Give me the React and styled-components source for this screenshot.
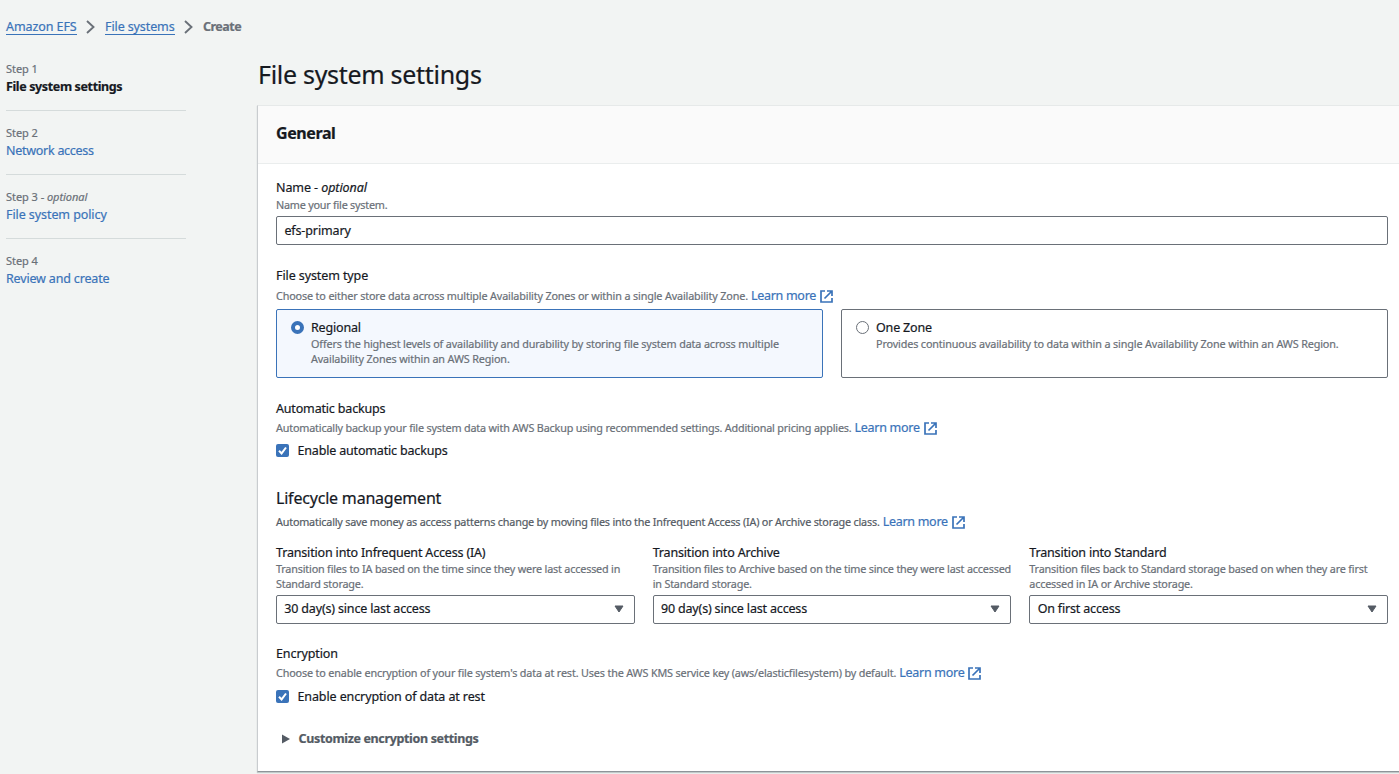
import React from "react";
import styled, { createGlobalStyle } from "styled-components";

const c = {
  page: "#f2f4f3",
  text: "#16191f",
  muted: "#6a7078",
  dark: "#545b64",
  link: "#3a73b9",
  border: "#6a7078",
};

const Global = createGlobalStyle`
  *, *::before, *::after { box-sizing: border-box; }
  html, body { margin: 0; height: 100%; overflow: hidden; }
  body {
    background: ${c.page};
    color: ${c.text};
    font-family: "Noto Sans", "Open Sans", sans-serif;
    font-size: 12.5px;
    letter-spacing: -0.17px;
    line-height: 20px;
    -webkit-text-stroke: 0.2px currentColor;
  }
  h1, h2, h3, p, ol, ul { margin: 0; padding: 0; font-weight: 400; list-style: none; }
`;

const Page = styled.div`
  width: 1399px;
  height: 774px;
  overflow: hidden;
`;

const Breadcrumbs = styled.nav`
  display: flex;
  align-items: center;
  height: 20px;
  margin: 17px 0 0 6px;
`;

const Crumb = styled.a`
  color: ${c.link};
  line-height: 18px;
  height: 17px;
  margin-bottom: 1px;
  border-bottom: 1px solid ${c.link};
  letter-spacing: ${(p) => p.$track}px;
  white-space: nowrap;
`;

const CurrentCrumb = styled.span`
  color: ${c.muted};
  font-weight: 700;
  letter-spacing: -0.5px;
`;

const Chevron = styled.svg`
  width: 9px;
  height: 14px;
  margin: 0 10px 0 9.5px;
  fill: none;
  stroke: ${c.muted};
  stroke-width: 1.9;
`;

const Columns = styled.div`
  display: flex;
  align-items: flex-start;
`;

const Steps = styled.ol`
  width: 180px;
  margin: 23px 71px 0 6px;
  flex: none;
`;

const Step = styled.li`
  border-bottom: ${(p) => (p.$last ? "none" : "1px solid #d5dbdb")};
  padding-top: ${(p) => (p.$first ? 0 : 13)}px;
  height: ${(p) => (p.$first ? 51 : 64)}px;
`;

const StepNumber = styled.div`
  font-size: 11px;
  line-height: 17px;
  letter-spacing: -0.05px;
  color: ${c.muted};
`;

const StepTitle = styled.div`
  margin-top: 1px;
  line-height: 18px;
  color: ${(p) => (p.$active ? c.text : c.link)};
  font-weight: ${(p) => (p.$active ? 700 : 400)};
  letter-spacing: ${(p) => p.$track}px;
`;

const Main = styled.main`
  width: 1149px;
  flex: none;
  padding-top: 19px;
`;

const Title = styled.h1`
  font-size: 25px;
  line-height: 36px;
  letter-spacing: -0.3px;
  padding-left: 1px;
  margin-bottom: 13px;
`;

const Panel = styled.section`
  height: 667px;
  background: #fff;
  border: 1px solid #c9cccf;
  border-top-color: #e6e9e9;
  border-bottom-color: #8e9499;
  box-shadow: 0 1px 1px rgba(0, 28, 36, 0.2);
`;

const PanelHeader = styled.header`
  height: 58px;
  padding: 15px 18px;
  background: #fafafa;
  border-bottom: 1px solid #eaeded;
`;

const PanelTitle = styled.h2`
  font-size: 16px;
  font-weight: 700;
  line-height: 24px;
  letter-spacing: -0.4px;
`;

const PanelBody = styled.div`
  width: 1148px;
  padding: 14px 18px 0;
`;

const Field = styled.div`
  margin-bottom: ${(p) => p.$after}px;
`;

const Label = styled.div`
  line-height: ${(p) => p.$line || 20}px;
  letter-spacing: ${(p) => p.$track || -0.17}px;
`;

const Hint = styled.p`
  margin: -1px 0 0;
  font-size: 10.8px;
  letter-spacing: ${(p) => p.$track || -0.18}px;
  line-height: 15px;
  color: ${c.muted};
`;

const LinkedHint = styled(Hint)`
  display: flex;
  align-items: baseline;
  height: 18px;
  margin: ${(p) => p.$before || 0}px 0 0;
  line-height: 18px;
  white-space: nowrap;
  color: ${(p) => (p.$dark ? c.dark : c.muted)};
`;

const MoreLink = styled.a`
  display: inline-flex;
  align-items: center;
  margin-left: 3px;
  font-size: 12.5px;
  letter-spacing: -0.28px;
  color: ${c.link};
`;

const ExternalIcon = styled.svg`
  width: 13px;
  height: 13px;
  margin-left: 4px;
  fill: none;
  stroke: ${c.link};
  stroke-width: 1.7;
`;

const ControlBox = styled.div`
  display: flex;
  align-items: center;
  justify-content: space-between;
  height: 29px;
  margin-top: 4px;
  padding: 0 10px 2px 7.3px;
  background: #fff;
  border: 1px solid ${c.border};
  border-radius: 2px;
`;

const TextInput = styled.input`
  display: block;
  width: 100%;
  height: 29px;
  margin-top: 4px;
  padding: 0 7.4px;
  font: inherit;
  letter-spacing: -0.12px;
  color: inherit;
  background: #fff;
  border: 1px solid ${c.border};
  border-radius: 2px;
  outline: none;
`;

const Caret = styled.svg`
  width: 10px;
  height: 8px;
  fill: ${c.dark};
  stroke: ${c.dark};
  stroke-linejoin: round;
`;

const Tiles = styled.div`
  display: grid;
  grid-template-columns: 1fr 1fr;
  gap: 18px;
  margin-top: 4px;
`;

const Tile = styled.div`
  display: flex;
  height: 69px;
  padding: 8px 14px;
  border: 1px solid ${(p) => (p.$selected ? c.link : c.border)};
  border-radius: 2px;
  background: ${(p) => (p.$selected ? "#f4f8fe" : "#fff")};
`;

const Radio = styled.span`
  flex: none;
  width: 13px;
  height: 13px;
  margin: 3px 7px 0 0;
  border-radius: 50%;
  background: #fff;
  border: ${(p) => (p.$selected ? `4px solid ${c.link}` : `1px solid ${c.border}`)};
`;

const TileHint = styled(Hint)`
  max-width: 480px;
`;

const CheckRow = styled.div`
  display: flex;
  align-items: center;
  gap: 8.5px;
  height: 20px;
  margin-top: ${(p) => p.$before}px;
  letter-spacing: ${(p) => p.$track || -0.17}px;
`;

const CheckBox = styled.svg`
  width: 13px;
  height: 13px;
  margin-bottom: 1px;
  background: ${c.link};
  border-radius: 2px;
  fill: none;
  stroke: #fff;
  stroke-width: 2;
`;

const SectionTitle = styled.h3`
  font-size: 16px;
  line-height: 22px;
  letter-spacing: -0.2px;
  margin-bottom: 4px;
`;

const Selects = styled.div`
  display: grid;
  grid-template-columns: repeat(3, 1fr);
  gap: 18px;
  margin: 12px 0 20px;
`;

const Expander = styled.div`
  display: flex;
  align-items: center;
  height: 20px;
  margin: 22px 0 0 6px;
  color: ${c.dark};
  font-weight: 700;
  letter-spacing: -0.35px;
`;

const ExpandArrow = styled.svg`
  width: 8px;
  height: 10px;
  margin-right: 8.5px;
  fill: ${c.dark};
`;

const Separator = () => (
  <Chevron viewBox="0 0 9 14">
    <path d="M1 1l6.5 6L1 13" />
  </Chevron>
);

const LearnMore = () => (
  <MoreLink>
    Learn more
    <ExternalIcon viewBox="0 0 13 13">
      <path d="M5 1H1v11h11V8M7 1H12v5M12 1L4.5 8.5" />
    </ExternalIcon>
  </MoreLink>
);

const Check = ({ before, track, children }) => (
  <CheckRow $before={before} $track={track}>
    <CheckBox viewBox="0 0 13 13">
      <path d="M3 6.7l2.6 2.7L10 3.5" />
    </CheckBox>
    <span>{children}</span>
  </CheckRow>
);

const selects = [
  ["Transition into Infrequent Access (IA)", "Transition files to IA based on the time since they were last accessed in Standard storage.", "30 day(s) since last access"],
  ["Transition into Archive", "Transition files to Archive based on the time since they were last accessed in Standard storage.", "90 day(s) since last access"],
  ["Transition into Standard", "Transition files back to Standard storage based on when they are first accessed in IA or Archive storage.", "On first access"],
];

export default function App() {
  return (
    <Page>
      <Global />
      <Breadcrumbs>
        <Crumb $track={-0.08}>Amazon EFS</Crumb>
        <Separator />
        <Crumb $track={-0.12}>File systems</Crumb>
        <Separator />
        <CurrentCrumb>Create</CurrentCrumb>
      </Breadcrumbs>
      <Columns>
        <Steps>
          <Step $first>
            <StepNumber>Step 1</StepNumber>
            <StepTitle $active $track={-0.37}>File system settings</StepTitle>
          </Step>
          <Step>
            <StepNumber>Step 2</StepNumber>
            <StepTitle $track={-0.27}>Network access</StepTitle>
          </Step>
          <Step>
            <StepNumber>Step 3 - <i>optional</i></StepNumber>
            <StepTitle $track={-0.08}>File system policy</StepTitle>
          </Step>
          <Step $last>
            <StepNumber>Step 4</StepNumber>
            <StepTitle $track={-0.17}>Review and create</StepTitle>
          </Step>
        </Steps>
        <Main>
          <Title>File system settings</Title>
          <Panel>
            <PanelHeader>
              <PanelTitle>General</PanelTitle>
            </PanelHeader>
            <PanelBody>
              <Field $after={21}>
                <Label $track={-0.08}>Name - <i>optional</i></Label>
                <Hint $track={-0.22}>Name your file system.</Hint>
                <TextInput defaultValue="efs-primary" />
              </Field>
              <Field $after={21}>
                <Label $track={-0.1}>File system type</Label>
                <LinkedHint $before={1} $track={-0.148}>
                  Choose to either store data across multiple Availability Zones or within a single Availability Zone.
                  <LearnMore />
                </LinkedHint>
                <Tiles>
                  <Tile $selected>
                    <Radio $selected />
                    <div>
                      <Label $line={19}>Regional</Label>
                      <TileHint $track={-0.132}>Offers the highest levels of availability and durability by storing file system data across multiple Availability Zones within an AWS Region.</TileHint>
                    </div>
                  </Tile>
                  <Tile>
                    <Radio />
                    <div>
                      <Label $line={19}>One Zone</Label>
                      <TileHint $track={-0.135}>Provides continuous availability to data within a single Availability Zone within an AWS Region.</TileHint>
                    </div>
                  </Tile>
                </Tiles>
              </Field>
              <Field $after={26}>
                <Label>Automatic backups</Label>
                <LinkedHint $track={-0.176}>
                  Automatically backup your file system data with AWS Backup using recommended settings. Additional pricing applies.
                  <LearnMore />
                </LinkedHint>
                <Check before={4}>Enable automatic backups</Check>
              </Field>
              <SectionTitle>Lifecycle management</SectionTitle>
              <LinkedHint $dark $track={-0.195}>
                Automatically save money as access patterns change by moving files into the Infrequent Access (IA) or Archive storage class.
                <LearnMore />
              </LinkedHint>
              <Selects>
                {selects.map(([label, hint, value]) => (
                  <div key={label}>
                    <Label $line={19}>{label}</Label>
                    <Hint>{hint}</Hint>
                    <ControlBox>
                      {value}
                      <Caret viewBox="0 0 10 8">
                        <path d="M1 1h8L5 7z" />
                      </Caret>
                    </ControlBox>
                  </div>
                ))}
              </Selects>
              <Label $track={-0.1}>Encryption</Label>
              <LinkedHint $track={-0.151}>
                Choose to enable encryption of your file system's data at rest. Uses the AWS KMS service key (aws/elasticfilesystem) by default.
                <LearnMore />
              </LinkedHint>
              <Check before={5} track={-0.11}>Enable encryption of data at rest</Check>
              <Expander>
                <ExpandArrow viewBox="0 0 8 10">
                  <path d="M0 .5v9L8 5z" />
                </ExpandArrow>
                Customize encryption settings
              </Expander>
            </PanelBody>
          </Panel>
        </Main>
      </Columns>
    </Page>
  );
}
